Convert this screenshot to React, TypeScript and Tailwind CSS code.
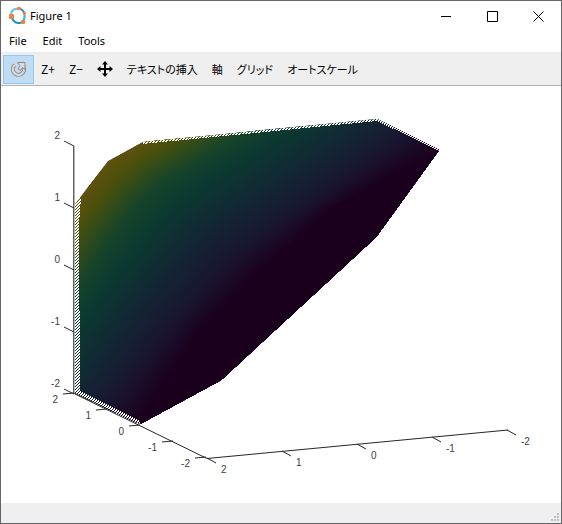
import type { ReactNode } from 'react';

type Point = [number, number];
type Rgb = [number, number, number];

// Iso-colour lines of the surface, each running from the lower left edge to the upper right edge.
const contours: { color: Rgb; points: Point[] }[] = [
  { color: [96, 80, 16], points: [[74, 206], [88, 185], [108, 160], [126, 150], [144, 140]] },
  { color: [76, 80, 10], points: [[74, 232], [92, 206], [114, 178], [134, 162], [170, 138]] },
  { color: [44, 74, 28], points: [[74, 266], [97, 231], [124, 197], [149, 173], [216, 134]] },
  { color: [20, 66, 42], points: [[74, 298], [104, 250], [138, 205], [162, 183], [252, 129]] },
  { color: [11, 56, 49], points: [[74, 332], [118, 272], [169, 210], [207, 182], [296, 125]] },
  { color: [18, 38, 51], points: [[76, 396], [141, 300], [202, 229], [262, 193], [378, 117]] },
  { color: [25, 20, 48], points: [[105, 410], [173, 322], [231, 258], [298, 210], [408, 133]] },
  { color: [27, 0, 29], points: [[135, 426], [204, 324], [255, 275], [335, 206], [440, 149]] },
];

const STEPS = 14;

const lerp = (a: number, b: number, t: number) => a + (b - a) * t;

// Each band covers everything to the lower right of its line, so later ones paint over earlier ones.
const bands = contours.slice(0, -1).flatMap((from, i) => {
  const to = contours[i + 1];
  return Array.from({ length: STEPS }, (_, s) => {
    const t = (s + 1) / STEPS;
    const line = from.points.map((p, k) => [
      lerp(p[0], to.points[k][0], t).toFixed(1),
      lerp(p[1], to.points[k][1], t).toFixed(1),
    ]);
    const fill = from.color.map((c, k) => Math.round(lerp(c, to.color[k], t))).join(',');
    return { fill: `rgb(${fill})`, points: `${line.join(' ')} 500,149 500,500 70,500` };
  });
});

const values = [2, 1, 0, -1, -2];

function Surface() {
  return (
    <g shapeRendering="crispEdges">
      <defs>
        <clipPath id="hull">
          <polygon points="75,204 108,161 143,142 377,119 439,150 376,237 221,380 140,424 75,393" />
        </clipPath>
        <pattern id="streaks" width="3" height="3" patternUnits="userSpaceOnUse">
          <path d="M0 0h2v1h-2zM0 1h1v1h-1zM2 1h1v1h-1zM1 2h2v1h-2z" fill="#fff" />
        </pattern>
      </defs>
      <g clipPath="url(#hull)">
        <rect x="70" y="110" width="380" height="320" fill="rgb(96,80,16)" />
        {bands.map((b, i) => (
          <polygon key={i} points={b.points} fill={b.fill} />
        ))}
        <polygon points="75,198 81,198 79,225 80,393 75,393" fill="url(#streaks)" />
        <polygon points="143,141 377,118 439,149 439,151 377,121 143,144" fill="url(#streaks)" />
        <polygon points="75,391 80,391 140,421 140,425 75,395" fill="url(#streaks)" />
      </g>
    </g>
  );
}

function Plot() {
  return (
    <svg
      viewBox="1 86 560 417"
      className="block h-auto w-full font-['Liberation_Sans',Arial,sans-serif] text-[10px]"
      role="img"
      aria-label="3D surface plot"
    >
      <Surface />
      <g stroke="#262626" strokeWidth="1" fill="none">
        <path d="M73.5 146V393" stroke="#606060" shapeRendering="crispEdges" />
        <path d="M74.5 146V393" stroke="#b4b4b4" shapeRendering="crispEdges" />
        <path d="M74 393.5L207 458.5L508 430" />
        {values.map((v, i) => (
          <path
            key={v}
            d={`M64 ${141 + i * 62}l10 5M${63 + i * 33} ${394 + i * 16}l11 -1M${207 + i * 75} ${458 - i * 7}l9 5`}
          />
        ))}
      </g>
      <g fill="#404040">
        {values.map((v, i) => (
          <g key={v}>
            <text x="60" y={139 + i * 62} textAnchor="end">{v}</text>
            <text x={58 + i * 33} y={403 + i * 16} textAnchor="end">{v}</text>
            <text x={221 + i * 75} y={473 - i * 7}>{v}</text>
          </g>
        ))}
      </g>
    </svg>
  );
}

function Logo() {
  return (
    <svg width="18" height="18" viewBox="0 0 18 18" aria-hidden="true">
      <g fill="none" stroke="#1497c4" strokeWidth="2.2">
        <path d="M2.5 9C1.5 4 4 1.5 9 2" stroke="#6cc5df" />
        <path d="M9 2C12 1.5 14.5 3.5 15 6" />
        <path d="M15.5 8C16 11 15 13 13.5 14.5" stroke="#4bb4d4" />
        <path d="M12 15.5C8 17 4.5 15 3 11" />
      </g>
      <rect x="0" y="7" width="5" height="5" rx="1" fill="#f5803e" />
      <rect x="8" y="0" width="4" height="3" rx="1" fill="#f5803e" />
      <rect x="14" y="5" width="3" height="3" rx="1" fill="#f5803e" />
      <rect x="12" y="13" width="4" height="4" rx="1" fill="#f5803e" />
    </svg>
  );
}

function RotateIcon() {
  return (
    <svg width="16" height="16" viewBox="0 0 16 16" aria-hidden="true">
      <path d="M3.8 4A5.6 5.6 0 1 0 12.6 6" fill="none" stroke="#8b8b8b" strokeWidth="4" />
      <path d="M3.8 4A5.6 5.6 0 1 0 12.6 6" fill="none" stroke="#dcdad6" strokeWidth="2.2" />
      <path
        d="M6.5 1.5H14V8.5L11.5 6.5L9.5 9.5L7 8L8.8 4.5Z"
        fill="#dcdad6"
        stroke="#8b8b8b"
        strokeWidth="1"
      />
    </svg>
  );
}

function MoveIcon() {
  return (
    <svg width="16" height="16" viewBox="0 0 16 16" aria-hidden="true">
      <path d="M8 0L11 3.5H9V7H12.5V5L16 8L12.5 11V9H9V12.5H11L8 16L5 12.5H7V9H3.5V11L0 8L3.5 5V7H7V3.5H5Z" />
    </svg>
  );
}

function ToolButton({ children, label }: { children: ReactNode; label?: string }) {
  return (
    <button type="button" aria-label={label} className="flex h-7 items-center px-[7px]">
      {children}
    </button>
  );
}

function WindowButton({ label, d }: { label: string; d: string }) {
  return (
    <button type="button" aria-label={label} className="flex h-7 w-[46px] items-center justify-center">
      <svg width="11" height="11" viewBox="0 0 11 11" fill="none" stroke="#000" aria-hidden="true">
        <path d={d} />
      </svg>
    </button>
  );
}

export default function App() {
  return (
    <div className="flex min-h-screen flex-col border border-[#66666a] bg-white font-['Noto_Sans','Noto_Sans_CJK_JP',sans-serif] text-[11px] text-black">
      <header className="flex h-[30px] items-center pl-2">
        <Logo />
        <h1 className="ml-[3px] flex-1">Figure 1</h1>
        <WindowButton label="Minimize" d="M0 5.5H10" />
        <WindowButton label="Maximize" d="M.5 .5H10.5V10.5H.5Z" />
        <WindowButton label="Close" d="M.5 .5L10.5 10.5M10.5 .5L.5 10.5" />
      </header>

      <nav className="flex h-[22px] items-center gap-4 border-b border-[#ececec] pl-2">
        <button type="button">File</button>
        <button type="button">Edit</button>
        <button type="button">Tools</button>
      </nav>

      <div
        role="toolbar"
        className="flex h-[33px] items-center border-b border-[#b4b4b4] bg-[#efefef] pl-[2px] font-['Noto_Sans_CJK_JP',sans-serif] [font-feature-settings:'palt']"
      >
        <button
          type="button"
          aria-label="Rotate"
          aria-pressed="true"
          className="flex h-[29px] w-[31px] items-center justify-center border border-[#90c8f6] bg-[#c0dcf3]"
        >
          <RotateIcon />
        </button>
        <ToolButton>
          <span className="text-xs">Z+</span>
        </ToolButton>
        <ToolButton>
          <span className="text-xs">Z−</span>
        </ToolButton>
        <ToolButton label="Pan">
          <MoveIcon />
        </ToolButton>
        <ToolButton>テキストの挿入</ToolButton>
        <ToolButton>軸</ToolButton>
        <ToolButton>グリッド</ToolButton>
        <ToolButton>オートスケール</ToolButton>
      </div>

      <main className="flex-1">
        <Plot />
      </main>

      <footer className="flex h-5 items-end justify-end bg-[#efefef] p-[2px]">
        <svg width="9" height="9" viewBox="0 0 9 9" fill="#bfbfbf" aria-hidden="true">
          <path d="M7 1h2v2h-2zM4 4h2v2h-2zM7 4h2v2h-2zM1 7h2v2h-2zM4 7h2v2h-2zM7 7h2v2h-2z" />
        </svg>
      </footer>
    </div>
  );
}
